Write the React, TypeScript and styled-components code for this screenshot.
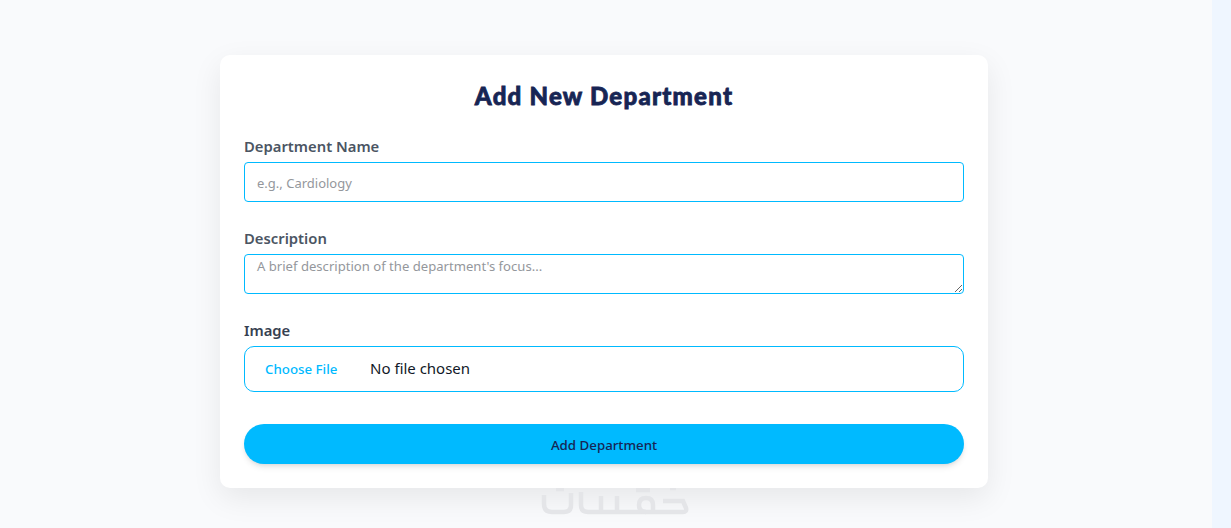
import React from 'react';
import styled, { createGlobalStyle } from 'styled-components';

const Global = createGlobalStyle`
  html, body { margin: 0; padding: 0; height: 100%; overflow: hidden; }
  * { box-sizing: border-box; }
  body { font-family: "Noto Sans", sans-serif; background: #eff6ff; }
`;
const Shell = styled.div`display: flex; height: 528px; width: 1231px;`;
const Page = styled.main`
  position: relative;
  width: 1212px;
  height: 528px;
  background: #f9fafc;
  display: flex;
  justify-content: center;
  align-items: flex-start;
  padding: 55px 4px 0 0;
  overflow: hidden;
`;
const Card = styled.form`
  position: relative;
  z-index: 1;
  width: 768px;
  height: 433px;
  background: #fff;
  border-radius: 10px;
  padding: 24px;
  box-shadow: 0 10px 30px rgba(0, 0, 0, 0.08);
`;
const Title = styled.h1`
  margin: 1px 0 22px;
  font: 900 24px/32px Lato, sans-serif;
  letter-spacing: 1.25px;
  -webkit-text-stroke: 0.8px #172554;
  color: #172554;
  text-align: center;
`;
const Field = styled.div`margin-bottom: 24px;`;
const Label = styled.label`
  display: block;
  font-size: 14.8px;
  line-height: 24px;
  font-weight: 600;
  color: #4b5563;
  margin-bottom: 4px;
`;
const DarkLabel = styled(Label)`color: #374151;`;
const Input = styled.input`
  display: block;
  width: 100%;
  height: 40px;
  padding: 1px 12px 0;
  border: 1px solid #00baff;
  border-radius: 4px;
  font: 13px "Noto Sans", sans-serif;
  outline: none;
  &::placeholder { color: #94979c; opacity: 1; }
`;
const Area = styled.textarea`
  display: block;
  width: 100%;
  height: 40px;
  padding: 1px 12px;
  border: 1px solid #00baff;
  border-radius: 4px;
  font: 13.1px/20px "Noto Sans", sans-serif;
  outline: none;
  &::placeholder { color: #94979c; opacity: 1; }
`;
const FileBox = styled.div`
  height: 46px;
  border: 1px solid #00baff;
  border-radius: 10px;
  display: flex;
  align-items: center;
  padding-left: 20px;
`;
const ChooseButton = styled.span`
  font-size: 13.3px;
  font-weight: 500;
  color: #00baff;
  width: 105px;
`;
const FileName = styled.span`
  font-size: 15px;
  color: #111827;
  margin-bottom: 2px;
`;
const Submit = styled.button`
  display: block;
  width: 100%;
  height: 40px;
  margin-top: 32px;
  padding-top: 2px;
  border: 0;
  border-radius: 20px;
  background: #00baff;
  color: #172554;
  font: 500 13.3px "Noto Sans", sans-serif;
  box-shadow: 0 4px 6px -1px rgba(0, 0, 0, 0.1), 0 2px 4px -2px rgba(0, 0, 0, 0.1);
`;
const Watermark = styled.svg`
  position: absolute;
  left: 541px;
  top: 488px;
  width: 148px;
  height: 30px;
  z-index: 2;
`;

export default function App() {
  return (
    <>
      <Global />
      <Shell>
        <Page>
          <Card onSubmit={(e) => e.preventDefault()}>
            <Title>Add New Department</Title>
            <Field>
              <Label>Department Name</Label>
              <Input placeholder="e.g., Cardiology" />
            </Field>
            <Field>
              <Label>Description</Label>
              <Area placeholder="A brief description of the department's focus..." />
            </Field>
            <DarkLabel>Image</DarkLabel>
            <FileBox>
              <ChooseButton>Choose File</ChooseButton>
              <FileName>No file chosen</FileName>
            </FileBox>
            <Submit type="submit">Add Department</Submit>
          </Card>
          <Watermark viewBox="0 0 148 30" fill="none" stroke="#e4e5e8" strokeWidth="4.5">
            <path d="M3 7v9q0 8 8 8h12q7 0 7-7V5" />
            <path d="M40 4v13q0 7 7 7h95q4 0 3-4l-3-7H122" />
            <path d="M60 8v16M76 8v16" />
            <path d="M95 2h14M112 24V17q0-7-7-7t-7 7q0 7 7 7" />
            <path d="M15 1h8M129 0h6" />
          </Watermark>
        </Page>
      </Shell>
    </>
  );
}
